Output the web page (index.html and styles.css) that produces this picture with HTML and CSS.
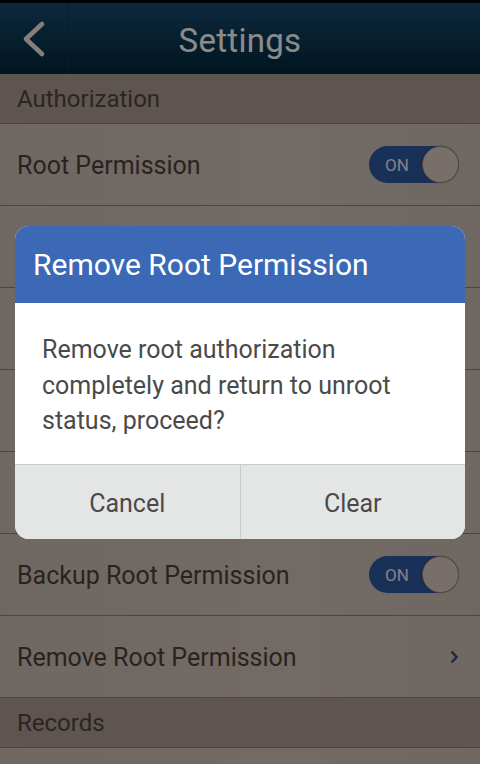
FILE: index.html
```html
<!DOCTYPE html>
<html lang="en">
<head>
    <meta charset="UTF-8">
    <meta name="viewport" content="width=device-width, initial-scale=1.0">
    <title>Settings</title>
    <link rel="stylesheet" href="styles.css">
</head>

<body>
<div class="screen">
    <div class="topbar">
        <div class="back">
            <svg width="26" height="38" viewBox="0 0 26 38">
                <path d="M21 4 L5 19 L21 34" fill="none" stroke="#f2e6de" stroke-width="4.6" stroke-linecap="round" stroke-linejoin="round"/>
            </svg>
        </div>
        <h1>Settings</h1>
    </div>

    <!-- 设置列表 -->
    <div class="list">
        <div class="section">Authorization</div>
        <div class="row">
            <span>Root Permission</span>
            <div class="toggle"><span>ON</span><i class="knob"></i></div>
        </div>
        <!-- 被弹窗遮住的行 -->
        <div class="row"></div>
        <div class="row"></div>
        <div class="row"></div>
        <div class="row"></div>
        <div class="row">
            <span>Backup Root Permission</span>
            <div class="toggle"><span>ON</span><i class="knob"></i></div>
        </div>
        <div class="row">
            <span>Remove Root Permission</span>
            <svg class="arrow" width="8" height="14" viewBox="0 0 8 14">
                <path d="M1.5 1.5 L6.5 7 L1.5 12.5" fill="none" stroke="#374c74" stroke-width="2.4"/>
            </svg>
        </div>
        <div class="section">Records</div>
        <div class="row"></div>
    </div>

    <!-- 弹窗 -->
    <div class="overlay">
        <div class="dialog">
            <div class="dialog-title">Remove Root Permission</div>
            <div class="dialog-body">Remove root authorization completely and return to unroot status, proceed?</div>
            <div class="dialog-buttons">
                <button class="btn">Cancel</button>
                <button class="btn">Clear</button>
            </div>
        </div>
    </div>
</div>
</body>
</html>
```

FILE: styles.css
```css
* {
    box-sizing: border-box;
    margin: 0;
    padding: 0;
}

body {
    font-family: Roboto, 'Noto Sans', sans-serif;
    background: #ccbdb4;
    width: 480px;
    height: 764px;
    overflow: hidden;
}

.screen {
    position: relative;
    width: 480px;
    height: 764px;
    overflow: hidden;
}

.topbar {
    height: 74px;
    border-top: 3px solid #000;
    background: linear-gradient(#164c6f, #04263c);
    display: flex;
    align-items: center;
    position: relative;
}

.back {
    width: 69px;
    height: 100%;
    border-right: 1px solid #0e3550;
    display: flex;
    align-items: center;
    padding-left: 21px;
}

.topbar h1 {
    position: absolute;
    left: 0;
    right: 0;
    padding-top: 3px;
    text-align: center;
    font-size: 33px;
    font-weight: 400;
    color: #fbffff;
    letter-spacing: 0.3px;
}

/* 列表 */
.section {
    height: 50px;
    background: #ab9b93;
    color: #4f4440;
    font-size: 24px;
    padding: 1px 0 0 17px;
    display: flex;
    align-items: center;
    border-bottom: 1px solid #8e7f7a;
}

.row {
    height: 82px;
    background: linear-gradient(90deg, #cbbcb3, #d0c2b9 60%, #cbbcb3);
    border-bottom: 1px solid #8e7f7a;
    display: flex;
    align-items: center;
    justify-content: space-between;
    padding: 0 21px 0 17px;
    color: #4c413a;
    font-size: 25px;
}

.row > span {
    padding-top: 2px;
}

.toggle {
    width: 90px;
    height: 37px;
    border-radius: 19px;
    background: #2f59a0;
    position: relative;
    display: flex;
    align-items: center;
    padding-left: 16px;
    color: #e6ecf3;
    font-size: 17px;
}

.toggle span {
    padding-top: 0;
}

.knob {
    position: absolute;
    right: 0;
    top: 0;
    width: 37px;
    height: 37px;
    border-radius: 50%;
    background: #dccbc1;
    border: 1px solid #9b8a80;
    box-shadow: -1px 0 2px rgba(0, 0, 0, 0.25);
}

.arrow {
    margin-right: 1px;
}

/* 弹窗 */
.overlay {
    position: absolute;
    inset: 0;
    background: rgba(0, 0, 0, 0.45);
}

.dialog {
    position: absolute;
    left: 15px;
    top: 226px;
    width: 450px;
    border-radius: 14px;
    overflow: hidden;
    background: #fff;
}

.dialog-title {
    height: 77px;
    background: #3b69b6;
    color: #fff;
    font-size: 30px;
    padding: 21px 0 0 18px;
}

.dialog-body {
    height: 162px;
    padding: 29px 42px 0 27px;
    font-size: 25px;
    line-height: 35.5px;
    color: #4a4a4a;
    border-bottom: 1px solid #c9cbca;
}

.dialog-buttons {
    display: flex;
    height: 74px;
    background: #e4e6e5;
}

.btn {
    flex: 1;
    border: none;
    background: none;
    font-family: inherit;
    font-size: 25px;
    padding-top: 3px;
    color: #4a4a4a;
}

.btn + .btn {
    border-left: 1px solid #c9cbca;
}
```
